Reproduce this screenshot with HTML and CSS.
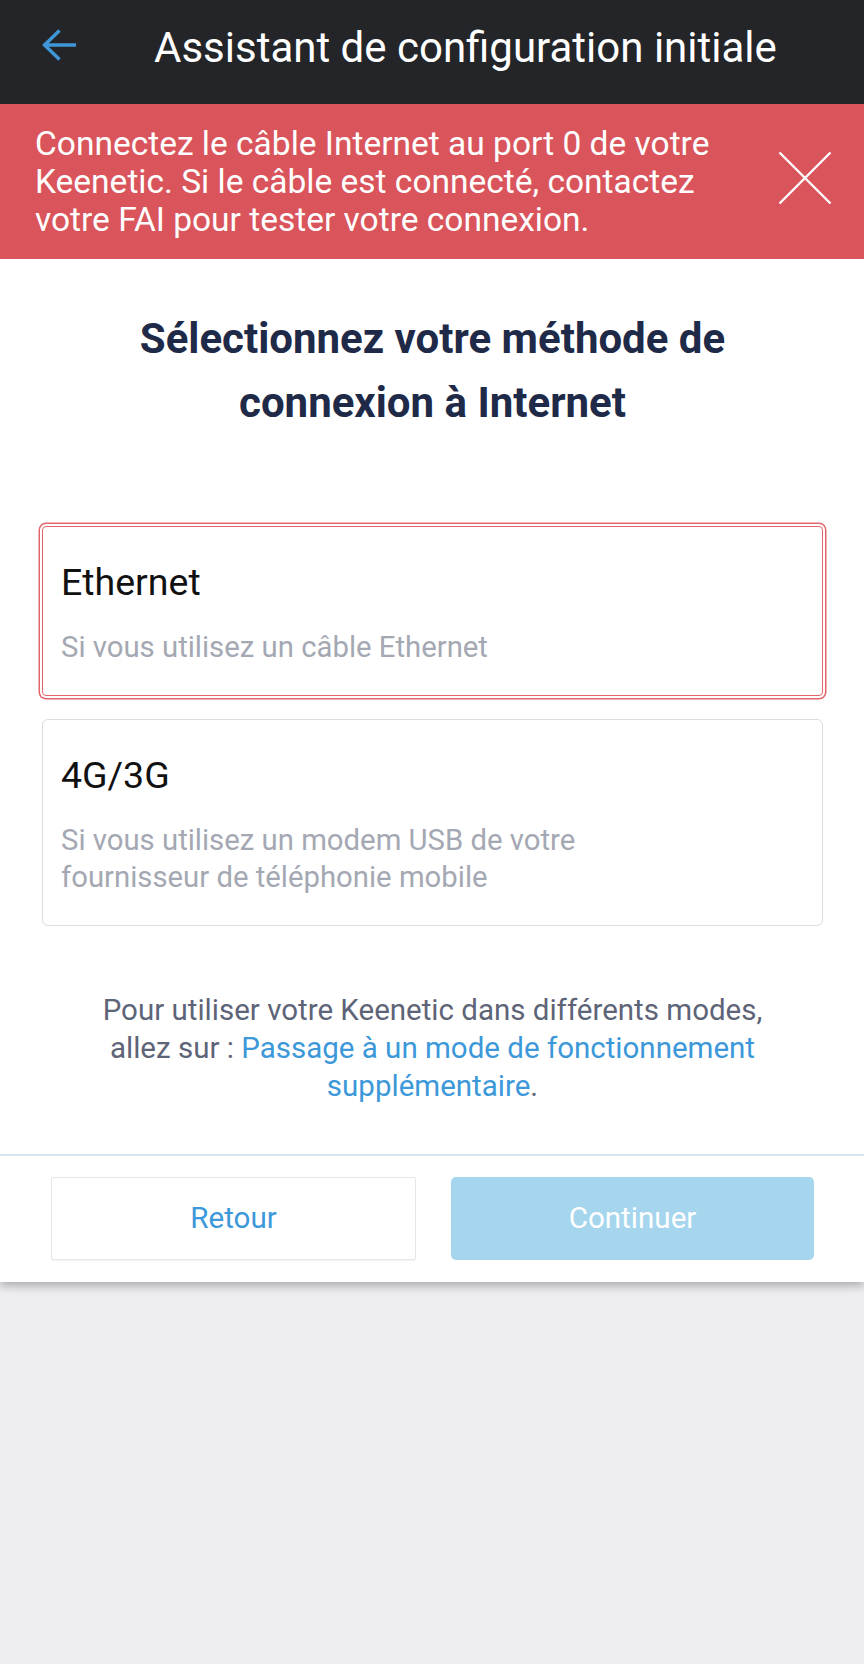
FILE: index.html
```html
<!DOCTYPE html>
<html lang="fr">
<head>
<meta charset="utf-8">
<title>Assistant de configuration initiale</title>
<link rel="stylesheet" href="styles.css">
</head>
<body>
<div class="app">
  <header class="topbar">
    <button class="back" aria-label="Retour">
      <svg width="36" height="34" viewBox="0 0 36 34">
        <path d="M34 16 H3 M17.5 1.5 L2.5 16 L17.5 30.5" fill="none" stroke="#3f97d8" stroke-width="3.4" stroke-linecap="butt" stroke-linejoin="miter"/>
      </svg>
    </button>
    <h1 class="topbar-title">Assistant de configuration initiale</h1>
  </header>

  <div class="alert">
    <p class="alert-text">Connectez le câble Internet au port 0 de votre Keenetic. Si le câble est connecté, contactez votre FAI pour tester votre connexion.</p>
    <button class="alert-close" aria-label="Fermer">
      <svg width="54" height="54" viewBox="0 0 54 54">
        <path d="M1.5 1.5 L52.5 52.5 M52.5 1.5 L1.5 52.5" fill="none" stroke="#ffffff" stroke-width="2.4"/>
      </svg>
    </button>
  </div>

  <main class="content">
    <h2 class="heading">Sélectionnez votre méthode de connexion à Internet</h2>

    <div class="options">
      <div class="option option--selected">
        <div class="option-title">Ethernet</div>
        <div class="option-desc">Si vous utilisez un câble Ethernet</div>
      </div>
      <div class="option">
        <div class="option-title">4G/3G</div>
        <div class="option-desc">Si vous utilisez un modem USB de votre<br>fournisseur de téléphonie mobile</div>
      </div>
    </div>

    <p class="info">Pour utiliser votre Keenetic dans différents modes, allez sur : <a class="link" href="#">Passage à un mode de fonctionnement supplémentaire</a>.</p>
  </main>

  <footer class="actions">
    <button class="btn btn-secondary">Retour</button>
    <button class="btn btn-primary">Continuer</button>
  </footer>
</div>
</body>
</html>
```

FILE: styles.css
```css
* {
  box-sizing: border-box;
}

html, body {
  margin: 0;
  padding: 0;
}

body {
  background: #eeeef1;
  font-family: Roboto, "Noto Sans", "Liberation Sans", sans-serif;
  width: 864px;
  min-height: 1664px;
}

.app {
  background: #ffffff;
  box-shadow: 0 4px 9px rgba(0, 0, 0, 0.28);
}

/* Top bar */
.topbar {
  height: 104px;
  background: #232529;
  display: flex;
  align-items: center;
  padding: 0 0 8px 42px;
}

.back {
  background: none;
  border: 0;
  padding: 0;
  margin: 0 76px 0 0;
  width: 36px;
  height: 34px;
  display: block;
  position: relative;
  top: -2px;
}

.back svg {
  display: block;
}

.topbar-title {
  margin: 0;
  color: #ffffff;
  font-weight: 400;
  font-size: 42px;
  line-height: 50px;
  white-space: nowrap;
}

/* Alert banner */
.alert {
  background: #d9545b;
  height: 155px;
  display: flex;
  align-items: center;
  padding: 0 32px 0 35px;
}

.alert-text {
  margin: 0;
  width: 705px;
  color: #ffffff;
  font-size: 33.5px;
  line-height: 38px;
}

.alert-close {
  margin-left: auto;
  background: none;
  border: 0;
  padding: 0;
  width: 54px;
  height: 54px;
  position: relative;
  top: -4px;
}

.alert-close svg {
  display: block;
}

/* Content */
.content {
  padding: 48px 41px 49px 42px;
}

.heading {
  margin: 0 auto;
  max-width: 680px;
  text-align: center;
  color: #1e2a47;
  font-weight: 700;
  font-size: 42px;
  line-height: 64px;
}

.options {
  margin-top: 91px;
  display: flex;
  flex-direction: column;
  gap: 23px;
}

.option {
  border: 1px solid #dbdde2;
  border-radius: 6px;
  padding: 32px 20px 28px 18px;
  background: #ffffff;
}

.option--selected {
  border-color: #e2666c;
  border-radius: 4px;
  box-shadow: 0 0 0 2px #ffffff, 0 0 0 3.5px #e2666c;
}

.option-title {
  color: #111111;
  font-size: 37.5px;
  line-height: 46px;
  margin-bottom: 24px;
}

.option-desc {
  color: #a4a8b3;
  font-size: 29.3px;
  line-height: 37.5px;
}

.info {
  margin: 65px auto 0;
  max-width: 700px;
  text-align: center;
  color: #5e6478;
  font-size: 29.5px;
  line-height: 38px;
}

.link {
  color: #3c98d9;
  text-decoration: none;
}

/* Footer actions */
.actions {
  border-top: 2px solid #dbe7f0;
  padding: 21px 50px 22px 51px;
  display: flex;
  gap: 35px;
}

.btn {
  flex: 1;
  height: 83px;
  font-family: Roboto, "Noto Sans", "Liberation Sans", sans-serif;
  font-size: 29.6px;
  padding: 0;
  cursor: pointer;
}

.btn-secondary {
  background: #ffffff;
  color: #3c98d9;
  border: 1px solid #e6e6e6;
  border-radius: 2px;
  box-shadow: 0 1px 1px rgba(0, 0, 0, 0.05);
}

.btn-primary {
  background: #a6d5ee;
  color: #ffffff;
  border: 0;
  border-radius: 5px;
}
```
